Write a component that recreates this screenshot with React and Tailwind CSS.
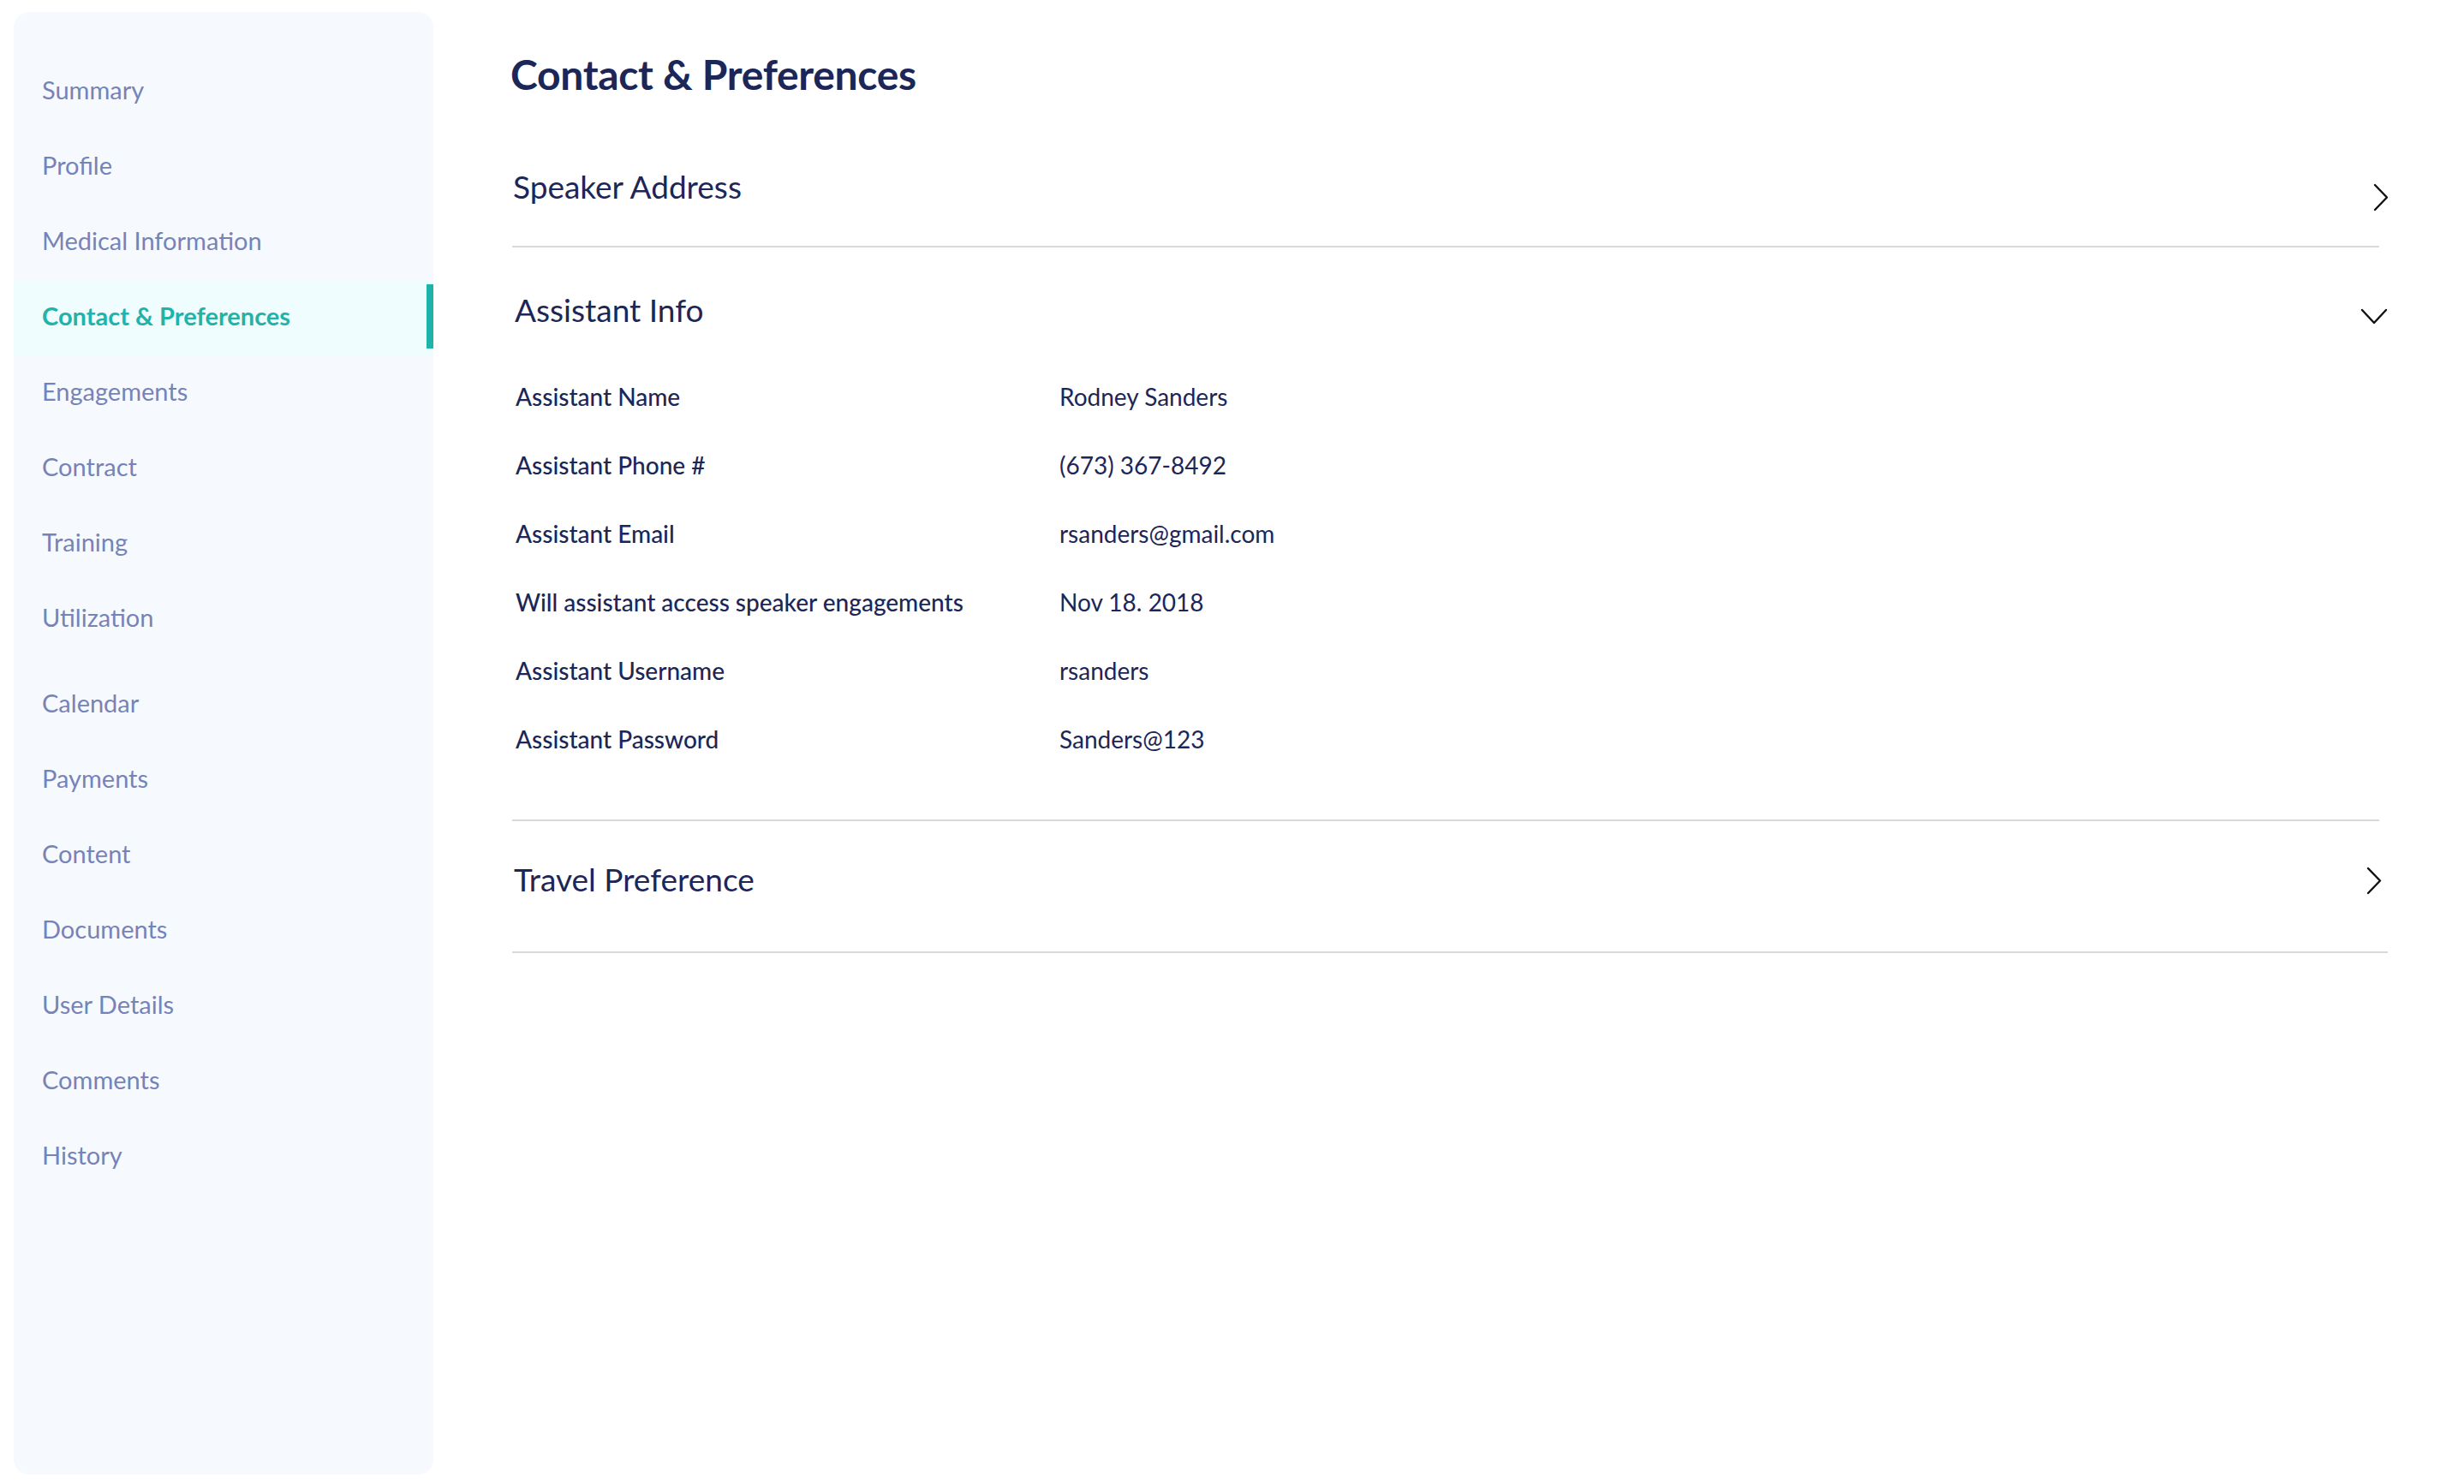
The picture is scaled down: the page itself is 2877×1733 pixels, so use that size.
import React from "react";

const navTop = ["Summary", "Profile", "Medical Information", "Contact & Preferences", "Engagements", "Contract", "Training", "Utilization"];
const navBottom = ["Calendar", "Payments", "Content", "Documents", "User Details", "Comments", "History"];
const ACTIVE = "Contact & Preferences";

const rows = [
  ["Assistant Name", "Rodney Sanders"],
  ["Assistant Phone #", "(673) 367-8492"],
  ["Assistant Email", "rsanders@gmail.com"],
  ["Will assistant access speaker engagements", "Nov 18. 2018"],
  ["Assistant Username", "rsanders"],
  ["Assistant Password", "Sanders@123"],
];

function NavItem({ label }) {
  const active = label === ACTIVE;
  return (
    <div
      className={
        "relative h-[88px] flex items-center pb-[7px] pl-[33px] text-[29px] leading-none " +
        (active ? "bg-[#effdff] text-[#1fb3a9] font-bold" : "text-[#7683b8]")
      }
    >
      {label}
      {active && <div className="absolute right-0 top-[4px] w-[8px] h-[75px] bg-[#1fb3a9]" />}
    </div>
  );
}

function ChevronRight({ className }) {
  return (
    <svg className={className} width="18" height="33" viewBox="0 0 18 33" fill="none">
      <polyline points="2,2 16,16.5 2,31" stroke="#111" strokeWidth="2.4" strokeLinecap="round" strokeLinejoin="round" />
    </svg>
  );
}

function ChevronDown({ className }) {
  return (
    <svg className={className} width="32" height="19" viewBox="0 0 32 19" fill="none">
      <polyline points="2,2 16,17 30,2" stroke="#111" strokeWidth="2.4" strokeLinecap="round" strokeLinejoin="round" />
    </svg>
  );
}

export default function App() {
  return (
    <div className="min-h-[1733px] w-full bg-white flex items-start" style={{ fontFamily: "Lato, 'Noto Sans', sans-serif" }}>
      <aside className="ml-[16px] mt-[14px] w-[490px] h-[1708px] shrink-0 rounded-[18px] bg-[#f6fafe] pt-[50px] overflow-hidden">
        {navTop.map((l) => (
          <NavItem key={l} label={l} />
        ))}
        <div className="h-[12px]" />
        {navBottom.map((l) => (
          <NavItem key={l} label={l} />
        ))}
      </aside>

      <main className="ml-[92px] w-[2190px] shrink-0 pt-[57px] text-[#1c2657]">
        <h1 className="h-[60px] -ml-[2px] flex items-center text-[48px] font-bold leading-none tracking-[-0.3px]">Contact &amp; Preferences</h1>

        {/* Speaker Address */}
        <section className="h-[172px] mr-[10px] border-b-2 border-[#d9d9d9] flex justify-between items-start">
          <div className="mt-[80px] h-[40px] flex items-center pl-[1px] text-[37px] leading-none">Speaker Address</div>
          <ChevronRight className="mt-[97px] -mr-[11px]" />
        </section>

        {/* Assistant Info */}
        <section className="mr-[10px] border-b-2 border-[#d9d9d9] pb-[54px]">
          <div className="h-[134px] flex justify-between items-start">
            <div className="mt-[52px] h-[40px] flex items-center pl-[3px] text-[37px] leading-none">Assistant Info</div>
            <ChevronDown className="mt-[71px] -mr-[10px]" />
          </div>
          {rows.map(([k, v]) => (
            <div key={k} className="h-[80px] flex items-center">
              <div className="w-[639px] pl-[4px] text-[28px] font-medium leading-none">{k}</div>
              <div className="text-[28px] leading-none">{v}</div>
            </div>
          ))}
        </section>

        {/* Travel Preference */}
        <section className="h-[154px] border-b-2 border-[#d9d9d9] flex justify-between items-start">
          <div className="mt-[47px] h-[40px] flex items-center pl-[2px] text-[37px] leading-none">Travel Preference</div>
          <ChevronRight className="mt-[53px] mr-[7px]" />
        </section>
      </main>
    </div>
  );
}
